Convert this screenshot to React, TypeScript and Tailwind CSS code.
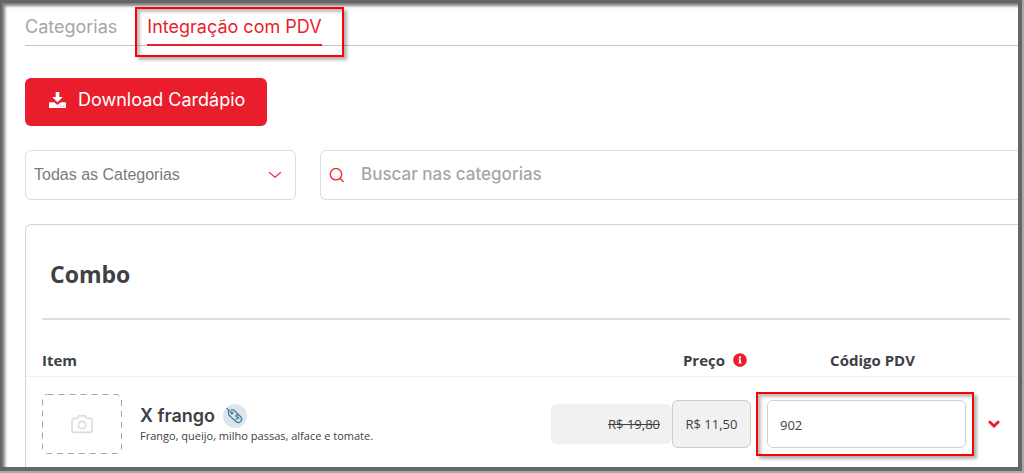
import React from "react";
import { FaInfoCircle } from "react-icons/fa";

const GEOMETRIC = "font-['Inter',sans-serif]";

function Highlight({ className }: { className: string }) {
  return (
    <span
      aria-hidden="true"
      className={`pointer-events-none absolute border-2 border-[#fe0000] shadow-[3px_3px_3px_rgba(0,0,0,0.3),inset_3px_3px_3px_rgba(0,0,0,0.25)] ${className}`}
    />
  );
}

function DownloadIcon() {
  return (
    <svg viewBox="0 0 17 16" className="h-4 w-[17px]" fill="white">
      <path d="M6.700 0h3.600v5h3.500L8.500 10.200 3.200 5h3.500Z" />
      <path d="M.8 10.200h4.500l2 1.900c.7.700 1.700.7 2.400 0l2-1.900h4.500c.5 0 .8.300.8.800v4.200c0 .5-.3.800-.8.800H.8c-.5 0-.8-.3-.8-.8V11c0-.5.3-.8.8-.8Z" />
      <path d="M11.500 13.800h1.200v1h-1.200ZM14 13.800h1.200v1H14Z" fill="#ea1d2c" opacity=".55" />
    </svg>
  );
}

function ChevronThin() {
  return (
    <svg viewBox="0 0 14 8" className="h-2 w-3.5" fill="none" stroke="#f04355" strokeWidth="1.500" strokeLinecap="round" strokeLinejoin="round">
      <path d="M1.500 1.500 7 6.200l5.500-4.700" />
    </svg>
  );
}

function ChevronBold() {
  return (
    <svg viewBox="0 0 12 8" className="h-2 w-3" fill="none" stroke="#ea1d2c" strokeWidth="2.800">
      <path d="M1 1.200 6 6l5-4.800" />
    </svg>
  );
}

function SearchIcon() {
  return (
    <svg viewBox="0 0 16 16" className="size-4 shrink-0" fill="none" stroke="#ee2b3e" strokeWidth="1.400" strokeLinecap="round">
      <circle cx="7" cy="7.200" r="5.700" />
      <path d="m11.200 11.500 3 3" />
    </svg>
  );
}

function CameraIcon() {
  return (
    <svg viewBox="0 0 22 20" className="h-5 w-[22px]" fill="none" stroke="#dcdcdc" strokeWidth="1.700" strokeLinejoin="round">
      <path d="M3 4.300h3.500L8 1.800h6l1.500 2.500H19a2 2 0 0 1 2 2v10a2 2 0 0 1-2 2H3a2 2 0 0 1-2-2v-10a2 2 0 0 1 2-2Z" />
      <circle cx="11" cy="11" r="3.700" />
    </svg>
  );
}

function PriceTagIcon() {
  return (
    <svg viewBox="0 0 24 24" className="size-6 shrink-0" fill="none" stroke="#477d9c" strokeWidth="1.200" strokeLinecap="round" strokeLinejoin="round">
      <circle cx="12" cy="12" r="12" fill="#dde6ec" stroke="none" />
      <path d="m4 4.500 4.800 4.400" />
      <path d="M5.300 7.200 5.800 11l6.800 6.300c1.500 1.400 3.700 1.500 5 .2 1.400-1.400 1.300-3.600-.1-5L11 6.200 8.200 5.600" />
      <circle cx="9" cy="9" r=".9" />
      <path d="M14.800 11.200c-1-.9-2.600.1-2 1.200.6.900 2.100 0 2.700.9.600 1-.8 2.100-1.900 1.300M15.400 10.600l-.6.600M13 15.200l.6-.6" />
    </svg>
  );
}

export default function App() {
  return (
    <div className="bg-[#a9a9a9] pr-0.5 pb-0.5 font-['Open_Sans',sans-serif] text-[#3e4045]">
      <main className="overflow-hidden border-t-[3px] border-r-4 border-b-4 border-l-2 border-[#666666] bg-white shadow-[inset_3px_3px_3px_rgba(0,0,0,0.5)]">
        <nav className={`ml-[23px] flex h-[43px] gap-[30px] border-b border-[#c4c4c4] text-lg ${GEOMETRIC}`}>
          <a href="#categorias" className="flex h-[43px] items-center pt-1 text-[#a6a6a6]">
            Categorias
          </a>
          <a
            href="#integracao"
            aria-current="page"
            className="relative flex h-[43px] items-center border-b-2 border-[#ea1d2c] pt-1.5 text-[#ea1d2c]"
          >
            Integração com PDV
            <Highlight className="top-1 -right-[22px] -bottom-[13px] -left-3" />
          </a>
        </nav>

        <div className="mt-8 ml-[23px]">
          <button
            type="button"
            className={`flex h-12 items-center gap-3 rounded-md bg-[#ea1d2c] pr-[22px] pb-1 pl-6 text-lg text-white ${GEOMETRIC}`}
          >
            <DownloadIcon />
            Download Cardápio
          </button>
        </div>

        <div className="mt-6 ml-[23px] flex gap-6">
          <div className="relative w-[271px] shrink-0">
            <select
              aria-label="Categoria"
              className="h-[50px] w-full appearance-none rounded-md border border-[#dddddd] bg-white px-2 font-['Liberation_Sans',sans-serif] text-base text-[#7b7b7b]"
            >
              <option>Todas as Categorias</option>
            </select>
            <span className="pointer-events-none absolute inset-y-0 right-3.5 flex items-center">
              <ChevronThin />
            </span>
          </div>
          <label className="flex h-[50px] min-w-0 flex-1 items-center gap-4 rounded-l-md border border-r-0 border-[#dddddd] pl-2">
            <SearchIcon />
            <input
              type="search"
              aria-label="Buscar nas categorias"
              placeholder="Buscar nas categorias"
              className={`min-w-0 flex-1 text-[17px] font-medium outline-none placeholder:text-[#a6a6a6] ${GEOMETRIC}`}
            />
          </label>
        </div>

        <section className="mt-6 ml-[23px] rounded-tl-md border-t border-l border-[#d4d4d4]">
          <h2 className="mr-2 ml-4 flex h-[95px] items-center border-b-2 border-[#dddddd] pt-1.5 pl-2 text-[23px] font-bold">
            Combo
          </h2>
          <table className="mt-6 w-full table-fixed border-collapse text-left">
            <colgroup>
              <col />
              <col className="w-[200px]" />
              <col className="w-[231px]" />
              <col className="w-9" />
            </colgroup>
            <thead>
              <tr className="h-8 border-b border-[#f0f0f0] text-[15px]">
                <th scope="col" className="p-0 pl-4 font-bold">Item</th>
                <th scope="col" className="p-0 pr-1 font-bold">
                  <span className="flex items-center justify-end gap-2">
                    Preço
                    <FaInfoCircle className="size-3.5 text-[#ea1d2c]" />
                  </span>
                </th>
                <th scope="col" className="p-0 pl-3 text-center font-bold">Código PDV</th>
                <td />
              </tr>
            </thead>
            <tbody>
              <tr className="h-[91px]">
                <td className="p-0 pt-1 pl-4">
                  <div className="flex items-center gap-[18px]">
                    <svg viewBox="0 0 80 60" className="h-[60px] w-20 shrink-0" fill="none">
                      <rect x=".5" y=".5" width="79" height="59" rx="5" stroke="#a3a3a3" strokeDasharray="6 5" />
                      <svg x="29" y="20" width="22" height="20">
                        <CameraIcon />
                      </svg>
                    </svg>
                    <div>
                      <div className="flex items-center gap-2">
                        <h3 className={`text-lg leading-6 font-semibold ${GEOMETRIC}`}>X frango</h3>
                        <PriceTagIcon />
                      </div>
                      <p className="text-[11px] leading-4">Frango, queijo, milho passas, alface e tomate.</p>
                    </div>
                  </div>
                </td>
                <td className="p-0 pt-1">
                  <div className="flex items-center text-[13px]">
                    <s className="flex h-10 flex-1 items-center justify-end rounded-md bg-[#f1f1f1] pt-0.5 pr-3">R$ 19,80</s>
                    <span className="flex h-12 w-[79px] items-center justify-center rounded-md border border-[#cccccc] bg-[#f1f1f1] pt-0.5">
                      R$ 11,50
                    </span>
                  </div>
                </td>
                <td className="p-0 px-4 pt-1">
                  <div className="relative">
                    <input
                      aria-label="Código PDV"
                      defaultValue="902"
                      className="block h-12 w-full rounded-md border border-[#d0d0d0] bg-white px-3 pt-0.5 text-[13px]"
                    />
                    <Highlight className="-top-2 -right-2 -bottom-2 -left-[11px]" />
                  </div>
                </td>
                <td className="p-0 pt-1 pl-1.5">
                  <button type="button" aria-label="Expandir item" className="flex">
                    <ChevronBold />
                  </button>
                </td>
              </tr>
            </tbody>
          </table>
        </section>
      </main>
    </div>
  );
}
